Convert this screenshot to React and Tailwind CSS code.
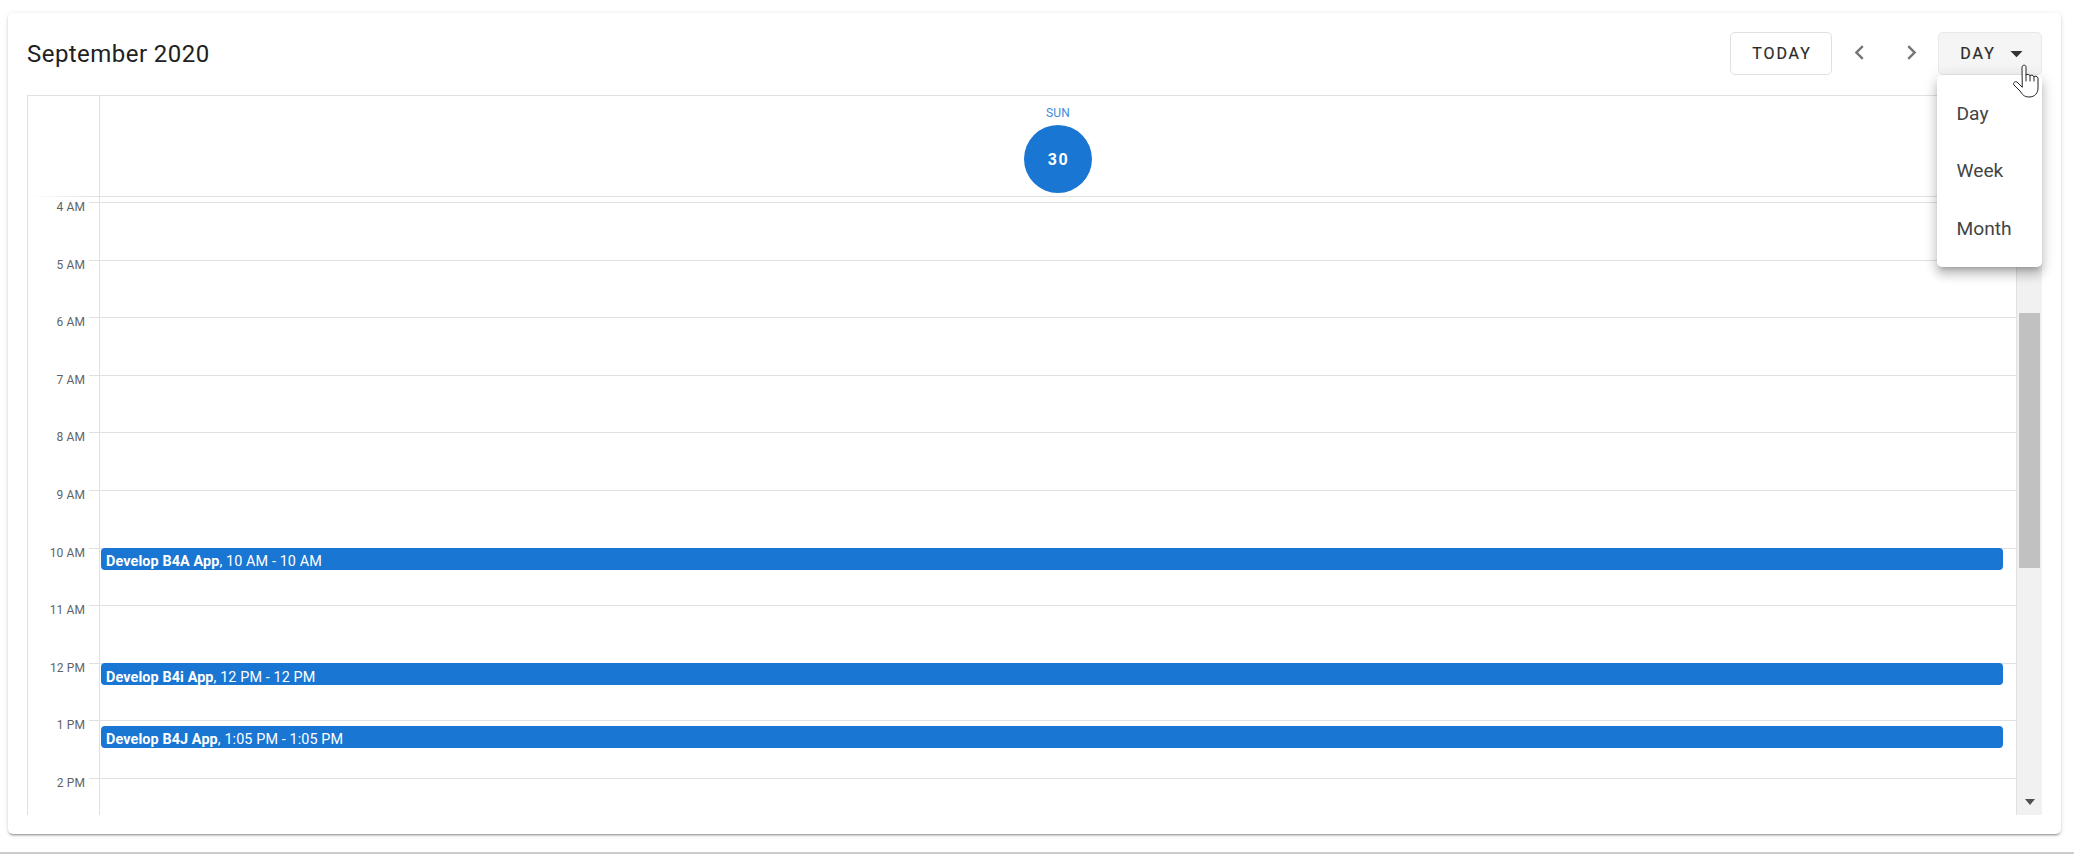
import React from "react";

const hours = ["4 AM", "5 AM", "6 AM", "7 AM", "8 AM", "9 AM", "10 AM", "11 AM", "12 PM", "1 PM", "2 PM"];

const events = {
  "10 AM": { box: "top-[-1px] leading-[27px]", name: "Develop B4A App", time: "10 AM - 10 AM" },
  "12 PM": { box: "top-[-1px] leading-[30px]", name: "Develop B4i App", time: "12 PM - 12 PM" },
  "1 PM": { box: "top-[4.6px] leading-[28px]", name: "Develop B4J App", time: "1:05 PM - 1:05 PM" },
};

function Glyph({ d, className }) {
  return (
    <svg viewBox="0 0 24 24" className={className} fill="currentColor">
      <path d={d} />
    </svg>
  );
}

function HourRow({ label }) {
  const ev = events[label];
  return (
    <div className="flex h-[57.6px] shrink-0">
      <div className="relative w-[72px] shrink-0 border-r border-[#e0e0e0] pr-[14px] text-right text-[12px] leading-[14px] tracking-[0.1px] text-[#5f6368]">
        <div className="absolute right-0 top-0 h-px w-[10px] bg-[#e0e0e0]" />
        <span className="block translate-y-[-1.8px]">{label}</span>
      </div>
      <div className="relative flex-1 border-t border-[#e0e0e0]">
        {ev && (
          <div className={`absolute left-px right-[13px] ${ev.box} h-[22px] overflow-hidden rounded-[4px] bg-[#1976d2] pl-[5px] text-[14.4px] tracking-[0.1px] text-white`}>
            <span className="font-bold">{ev.name}</span>, {ev.time}
          </div>
        )}
      </div>
    </div>
  );
}

function MenuItem({ children }) {
  return <div className="flex h-[57.6px] items-center pl-[19.5px] pt-[1px] text-[19.2px] text-[#444444]">{children}</div>;
}

export default function App() {
  return (
    <div className="relative flex h-[854px] w-[2074px] flex-col overflow-hidden bg-white font-['Roboto',sans-serif]">
      <div className="ml-[8px] mt-[13px] flex h-[821px] w-[2053px] shrink-0 flex-col rounded-[5px] bg-white px-[19px] pb-[19px] shadow-[0_3px_1px_-2px_rgba(0,0,0,0.2),0_2px_2px_0_rgba(0,0,0,0.14),0_1px_5px_0_rgba(0,0,0,0.12)]">
        <div className="flex h-[82px] shrink-0 items-start pt-[19px]">
          <div className="flex h-[43px] flex-1 items-center text-[24px] tracking-[0.45px] text-[#212121]">September 2020</div>
          <div className="flex h-[43px] w-[102px] items-center justify-center rounded-[5px] border border-[#e0e0e0] pl-[2px] pt-[1px] text-[16px] tracking-[1.9px] text-[#2a2a2a] [-webkit-text-stroke:0.2px_#2a2a2a]">TODAY</div>
          <div className="flex w-[106px] items-center justify-center gap-[23px] pt-[6px] text-[#757575]">
            <Glyph className="h-[29px] w-[29px]" d="M15.41 7.41L14 6l-6 6 6 6 1.41-1.41L10.83 12z" />
            <Glyph className="h-[29px] w-[29px]" d="M8.59 16.59L10 18l6-6-6-6-1.41 1.41L13.17 12z" />
          </div>
          <div className="flex h-[43px] w-[104px] items-center justify-center gap-[6px] rounded-[5px] border border-[#e8e8e8] bg-[#f5f5f5] pl-[11px] text-[16px] tracking-[1.9px] text-[#2a2a2a] [-webkit-text-stroke:0.2px_#2a2a2a]">
            <span className="pt-[1px]">DAY</span>
            <Glyph className="h-[29px] w-[29px] text-[#333]" d="M7 10l5 5 5-5H7z" />
          </div>
        </div>

        <div className="flex min-h-0 flex-1 flex-col border-l border-t border-[#e0e0e0]">
          <div className="flex h-[101px] shrink-0">
            <div className="relative w-[71px] shrink-0">
              <div className="absolute bottom-0 left-0 right-0 h-px bg-gradient-to-r from-white to-[#e0e0e0]" />
            </div>
            <div className="flex flex-1 flex-col items-center border-b border-l border-[#e0e0e0] pr-[26px] pt-[10px]">
              <div className="text-[12px] leading-[14px] tracking-[0.2px] text-[#3d8bd9]">SUN</div>
              <div className="mt-[5px] flex h-[68px] w-[68px] items-center justify-center rounded-full bg-[#1976d2] pl-[1px] pt-[1px] text-[16px] font-bold tracking-[1.5px] text-white">30</div>
            </div>
          </div>

          <div className="flex min-h-0 flex-1">
            <div className="flex min-h-0 flex-1 flex-col overflow-hidden">
              <div className="flex h-[5px] shrink-0">
                <div className="w-[72px] shrink-0 border-r border-[#e0e0e0]" />
              </div>
              {hours.map((h) => (
                <HourRow key={h} label={h} />
              ))}
            </div>
            <div className="flex w-[26px] shrink-0 flex-col items-center border-l border-[#e0e0e0] bg-[#f1f1f1]">
              <div className="mt-[116px] h-[255px] w-[21px] bg-[#c1c1c1]" />
              <div className="mb-[10px] mt-auto h-0 w-0 border-x-[5.5px] border-t-[6px] border-x-transparent border-t-[#505050]" />
            </div>
          </div>
        </div>
      </div>

      <div className="mt-[18px] h-[2px] shrink-0 bg-[#cccccc]" />

      <div className="absolute left-[1937px] top-[75px] w-[105px] rounded-[5px] bg-white pb-[9.2px] pt-[10px] shadow-[0_5px_5px_-3px_rgba(0,0,0,0.2),0_8px_10px_1px_rgba(0,0,0,0.14),0_3px_14px_2px_rgba(0,0,0,0.12)]">
        <MenuItem>Day</MenuItem>
        <MenuItem>Week</MenuItem>
        <MenuItem>Month</MenuItem>
      </div>

      <svg className="absolute left-[2012px] top-[64px] h-[34px] w-[27px]" viewBox="0 0 27 34" fill="#fff" stroke="#222" strokeWidth="1" strokeLinejoin="round" strokeLinecap="round">
        <path d="M10 3C10 .5 14 .5 14 3V11C15 10 17.5 10 18 12C18.5 10.5 21.5 11 22 13C22.5 11.5 25.5 12 26 14V24C26 29 23 33 17 33C12 33 10 30 8 27L2 21C.5 19 3 17 5 18L10 23Z" />
        <path d="M14 11V17M18 12V17M22 13V17" fill="none" />
      </svg>
    </div>
  );
}
